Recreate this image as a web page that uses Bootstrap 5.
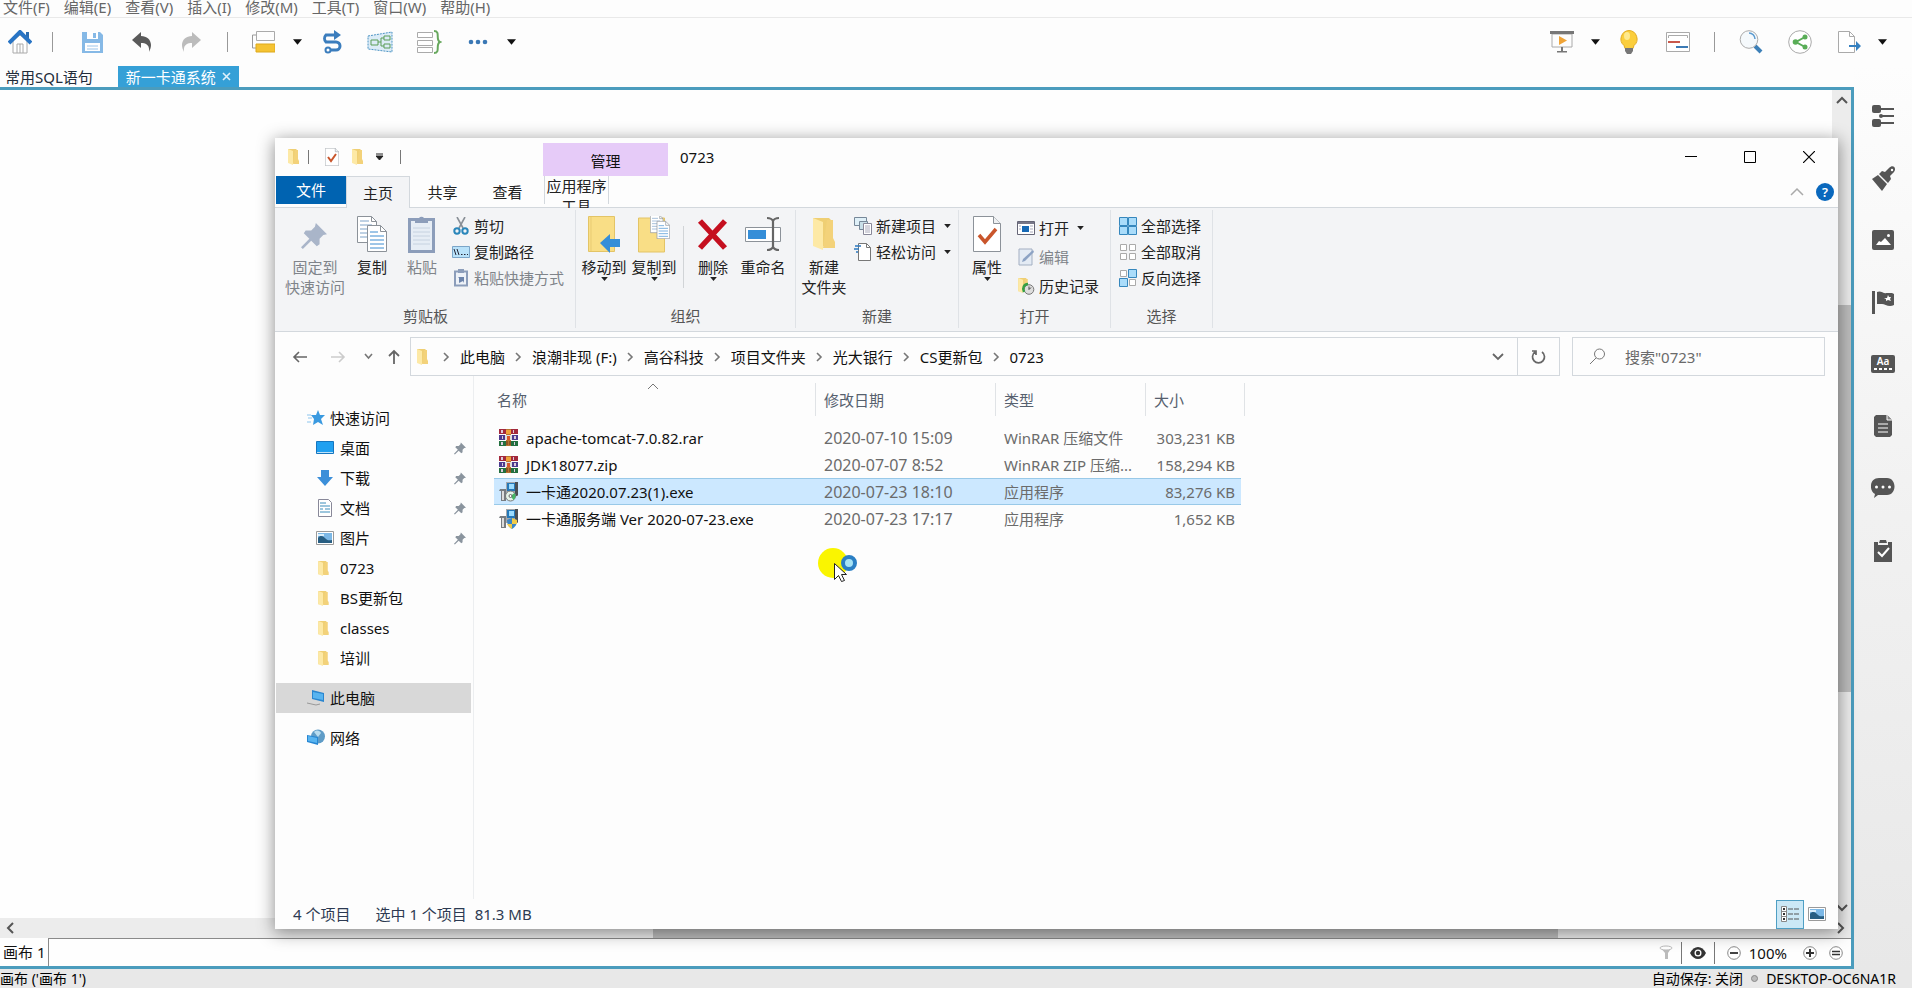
<!DOCTYPE html>
<html lang="zh-CN">
<head>
<meta charset="utf-8">
<meta name="viewport" content="width=device-width, initial-scale=1">
<title>0723</title>
<link href="https://cdn.jsdelivr.net/npm/bootstrap@5.3.0/dist/css/bootstrap.min.css" rel="stylesheet">
<style>
  :root { --frame: #4b9cbd; --line: #d3d8dd; --ribbon: #f3f4f6; }
  body { font-family: "Noto Sans", "Noto Sans CJK SC", sans-serif; font-size: 15px; line-height: 20px; color: #111; background: #fdfdfd; }
  button { border: 0; background: transparent; padding: 0; color: inherit; font: inherit; }
  a { color: inherit; text-decoration: none; }
  svg { flex: none; display: block; }

  /* host application */
  .app-menu { height: 18px; gap: 14px; padding-left: 3px; color: #666; border-bottom: 1px solid #e9e9e9; }
  .app-tools { height: 48px; padding-right: 21px; }
  .tool { width: 49px; display: flex; justify-content: center; }
  .tool-home { width: 40px; }
  .tool-drop { width: 18px; display: flex; justify-content: center; }
  .tool-sep { width: 24px; display: flex; justify-content: center; }
  .tool-sep::before { content: ""; width: 1px; height: 20px; background: #999; }
  .doc-tabs { height: 21px; }
  .doc-tab { padding: 0 5px; color: #222c3a; }
  .doc-tab-on { background: #35a0d7; color: #fff; padding: 0 8px; margin-left: 20px; gap: 6px; }
  .doc-frame { border: 3px solid var(--frame); border-left: 0; background: #fefefe; }
  .vscroll { width: 19px; background: #ececec; }
  .hscroll { height: 20px; background: #ececec; }
  .sb-end { flex: 0 0 20px; display: flex; align-items: center; justify-content: center; }
  .sb-thumb { background: #bdbdbd; }
  .sheet-bar { height: 28px; background: #fefefe; }
  .sheet-tab { width: 49px; padding-left: 3px; border-right: 1px solid #8a8a8a; }
  .sheet-rest { border-top: 1px solid #8a8a8a; padding-right: 8px; }
  .vr-dark { width: 1px; height: 22px; background: #777; }
  .side { width: 58px; padding: 19px 0 0; background: linear-gradient(#fdfdfd, #f1f1f1 50%, #e8e8e8); color: #555; }
  .side button { height: 62px; display: flex; align-items: center; justify-content: center; }
  .app-status { height: 19px; background: #e8e8e8; color: #000; padding-right: 16px; font-size: 14px; }

  /* explorer window lying over the application */
  .explorer { position: absolute; top: 138px; left: 275px; right: 74px; bottom: 59px; background: #fdfdfd; box-shadow: 0 3px 16px 1px rgba(0,0,0,.42); z-index: 5; }
  .titlebar { height: 38px; }
  .qat { width: 268px; padding-left: 12px; }
  .qat-sep { width: 1px; height: 14px; background: #777; }
  .ctx-head { width: 125px; background: #e6cbf8; margin-top: 5px; padding-top: 2px; }
  .ctx-tab { width: 125px; border: solid var(--line); border-width: 0 1px; margin-bottom: 3px; }
  .winbtn { width: 59px; display: flex; align-items: center; justify-content: center; }
  .rtabs { height: 32px; border-bottom: 1px solid var(--line); padding-left: 1px; }
  .rtab { width: 65px; color: #222; }
  .rtab-file { width: 70px; background: #0063b1; color: #fff; margin-bottom: 3px; }
  .rtab-on { width: 64px; background: var(--ribbon); border: 1px solid var(--line); border-bottom: 0; margin-bottom: -1px; }
  .ribbon { height: 124px; background: var(--ribbon); border-bottom: 1px solid var(--line); padding-left: 1px; color: #222; }
  .rgroup { border-right: 1px solid #dfe2e6; margin: 2px 0 3px; display: flex; flex-direction: column; }
  .rgroup-name { text-align: center; color: #555; line-height: 24px; }
  .big { width: 50px; display: flex; flex-direction: column; align-items: center; white-space: nowrap; padding-top: 6px; }
  .big svg.pic { margin-bottom: 3px; }
  .big-56 { width: 56px; }
  .big-70 { width: 70px; }
  .rsmall { display: flex; flex-direction: column; padding: 3px 2px; }
  .rsmall button { display: flex; align-items: center; gap: 4px; height: 26px; white-space: nowrap; }
  .rsmall-wide button { height: 29px; }
  .off { color: #80848a; }
  .addr-row { padding: 5px 13px 0 6px; height: 44px; color: #111; }
  .nav-btn { width: 38px; display: flex; align-items: center; justify-content: center; }
  .addr { border: 1px solid var(--line); margin-left: 1px; height: 39px; }
  .crumb { display: flex; align-items: center; white-space: nowrap; }
  .crumb svg { width: 27px; }
  .refresh { width: 42px; border-left: 1px solid var(--line); display: flex; align-items: center; justify-content: center; }
  .search { width: 253px; height: 39px; border: 1px solid var(--line); margin-left: 12px; padding-left: 16px; gap: 17px; }
  .search input { border: 0; background: transparent; outline: 0; min-width: 0; }
  .search input::placeholder { color: #6a6a6a; opacity: 1; }
  .tree { width: 199px; padding: 27px 2px 0 1px; border-right: 1px solid #eceef0; }
  .tree a { height: 30px; display: flex; align-items: center; padding: 0 5px 0 31px; gap: 5px; }
  .tree .sub a { padding-left: 40px; gap: 6px; }
  .tree .on { background: #d8d8d8; }
  .tree svg.ic { width: 18px; }
  .files { table-layout: fixed; width: 751px; margin: 7px 0 0 20px; border-collapse: separate; border-spacing: 0; color: #6b6b6b; }
  .files th { height: 33px; font-weight: 400; color: #56606e; padding: 0 8px; border-right: 1px solid #e0e3e6; }
  .files th:first-child { padding-left: 3px; }
  .files th:nth-child(4) { border-right: 0; }
  .files th:last-child { padding: 0; }
  .files tbody::before { content: ""; display: block; height: 8px; }
  .files td { height: 27px; padding: 0 7px 0 8px; white-space: nowrap; overflow: hidden; text-overflow: ellipsis; }
  .files td:first-child { padding-left: 5px; color: #111; }
  .files .num { text-align: right; padding-left: 0; padding-right: 6px; }
  .files .sel td:not(:last-child) { background: #cce8ff; border: solid #99c9e8; border-width: 1px 0; }
  .files td:last-child { padding: 0; }
  .files .wide { font-size: 16px; }
  .sort { position: absolute; left: 153px; top: -1px; }
  .pointer { position: absolute; left: 542px; top: 409px; }
  .exp-status { height: 30px; padding-left: 18px; gap: 25px; color: #2c3a52; font-size: 15px; }
  .view-on { width: 28px; height: 29px; background: #cbe8f6; border: 1px solid #4f9fc4; }
  .view-off { width: 34px; }
</style>
</head>
<body>
<svg width="0" height="0" class="position-absolute" aria-hidden="true">
  <defs>
    <symbol id="folder" viewBox="0 0 13 18"><path d="M1 1h8l1 1v13H1z" fill="#efcf74"/><path d="M8 2h3v9l1 2v3H6z" fill="#f3d27a"/><path d="M1 1l5 2v14l-5-2z" fill="#fde9a6"/></symbol>
    <symbol id="caret" viewBox="0 0 10 6"><path d="M0 0h10L5 6z" fill="currentColor"/></symbol>
    <symbol id="chev" viewBox="0 0 27 12"><path d="M11 2l4 4-4 4" fill="none" stroke="#777" stroke-width="1.6"/></symbol>
    <symbol id="up" viewBox="0 0 12 8"><path d="M1 7l5-5 5 5" fill="none" stroke="currentColor" stroke-width="2"/></symbol>
    <symbol id="pin" viewBox="0 0 14 14"><path d="M8 0l6 6-2 .5-2 2 0 3-1.500 1L5.500 9.500 1 14 0 13l4.500-4.500L1.500 5.500l1-1.500h3l2-2z" fill="currentColor"/></symbol>
    <symbol id="rar" viewBox="0 0 19 19"><path d="M0 1h19v5H0z" fill="#a3293c"/><path d="M0 7h19v5H0z" fill="#4c3b8f"/><path d="M0 13h19v5H0z" fill="#23703f"/><path d="M2 2h2v3H2zM14 2h1v3h-1zM3 8h1v3H3zM15 8h2v3h-2zM2 14h2v3H2zM15 14h1v3h-1z" fill="#dcd"/><path d="M7 1h5v17H7z" fill="#b97431"/><path d="M7 2h5v4H7z" fill="#f0a33a"/><path d="M6 7h7v5H6z" fill="#ddd"/><path d="M8 8h3v4H8z" fill="#d8572e"/><path d="M8 13v4M11 13v4" stroke="#653616"/></symbol>
    <symbol id="exe" viewBox="0 0 19 20"><path d="M7 0h10l2 2v12H7z" fill="#a3a8ad"/><path d="M16 0h3v13l-3 2z" fill="#4a4f54"/><path d="M8 1h8v8H8z" fill="#2578b8"/><path d="M10 2h5v5h-5z" fill="#9bdcff"/><path d="M1 7h6v12H2V9H0z" fill="#777c80"/><path d="M3 9h2v9H3z" fill="#ddd"/><circle cx="11.500" cy="14" r="5" fill="#e5f3e8" stroke="#777"/><path d="M11.500 14l4-3a5 5 0 0 1-1 7z" fill="#45b865"/><circle cx="11.500" cy="14" r="1.500" fill="#fff" stroke="#666"/></symbol>
    <symbol id="exe2" viewBox="0 0 19 20"><path d="M7 0h10l2 2v12H7z" fill="#a3a8ad"/><path d="M16 0h3v13l-3 2z" fill="#4a4f54"/><path d="M8 1h8v8H8z" fill="#2578b8"/><path d="M10 2h5v5h-5z" fill="#9bdcff"/><path d="M1 7h6v12H2V9H0z" fill="#777c80"/><path d="M3 9h2v9H3z" fill="#ddd"/><path d="M13 9l5 2c0 5-2 7-5 9-3-2-5-4-5-9z" fill="#3b86c6"/><path d="M13 9l5 2v4h-5zM13 15v5c-2-1-4-3-5-5z" fill="#f2cc48"/></symbol>
    <symbol id="page" viewBox="0 0 28 36"><path d="M.5.5h20l7 7v28H.5z" fill="#fff" stroke="#8c9299"/><path d="M20.500.5v7h7" fill="#eef0f2" stroke="#8c9299"/></symbol>
    <symbol id="photo" viewBox="0 0 18 14"><path d="M.5.5h17v13H.5z" fill="#fff" stroke="#9a9a9a"/><path d="M2 2h14v10H2z" fill="#7cb8e6"/><path d="M2 7c3-4 6-1 8 1s4 1 6 1v3H2z" fill="#285e82"/><path d="M2 3h6v2H2z" fill="#d9eefb"/></symbol>
    <symbol id="copies" viewBox="0 0 30 36"><path d="M.5.500h14l5 5v21H.5z" fill="#fff" stroke="#8c9299"/><path d="M14.500.5v5h5" fill="none" stroke="#8c9299"/><path d="M3 5h9M3 9h12M3 13h12M3 17h12M3 21h12" stroke="#7ea3c8"/><path d="M10.500 9.500h13l6 6v20h-19z" fill="#fff" stroke="#8c9299"/><path d="M23.500 9.500v6h6" fill="none" stroke="#8c9299"/><path d="M13 16h8M13 20h14M13 24h14M13 28h14M13 32h14" stroke="#3c8cd0"/></symbol>
  </defs>
</svg>

<div class="vh-100 d-flex flex-column overflow-hidden position-relative">
  <nav class="app-menu d-flex align-items-end flex-shrink-0" aria-label="菜单">
    <a href="#">文件(F)</a><a href="#">编辑(E)</a><a href="#">查看(V)</a><a href="#">插入(I)</a><a href="#">修改(M)</a><a href="#">工具(T)</a><a href="#">窗口(W)</a><a href="#">帮助(H)</a>
  </nav>

  <div class="app-tools d-flex align-items-center flex-shrink-0" role="toolbar">
    <button class="tool tool-home" aria-label="主页"><svg width="24" height="24"><path d="M5 11v12h14V11l-7-6z" fill="#fff" stroke="#aaa"/><path d="M9 23v-9h6v9M12 14v9" fill="none" stroke="#aaa"/><path d="M18 2h3v7l-3-3z" fill="#2b6cb0"/><path d="M1 13L12 2l11 11" fill="none" stroke="#2874c5" stroke-width="4"/></svg></button>
    <span class="tool-sep me-1"></span>
    <button class="tool" aria-label="保存"><svg width="21" height="21"><path d="M0 0h18l3 3v18H0z" fill="#86b9e6"/><path d="M5 0h11v7H5z" fill="#fff"/><path d="M11 1h3v5h-3z" fill="#86b9e6"/><path d="M3 11h15v8H3z" fill="#fff"/><path d="M5 14h11M5 17h11" stroke="#9cc5ea"/></svg></button>
    <button class="tool" aria-label="撤销"><svg width="20" height="20"><path d="M0 8L9 0v4c8 0 13 7 8 16 1-7-3-9-8-9v5z" fill="#5a5a5a"/></svg></button>
    <button class="tool" aria-label="重做"><svg width="20" height="20"><path d="M20 8l-9-8v4C3 4-2 11 3 20c-1-7 3-9 8-9v5z" fill="#bcbcbc"/></svg></button>
    <span class="tool-sep"></span>
    <button class="tool" aria-label="主题"><svg width="23" height="22"><path d="M4 4H.5v13H4" fill="none" stroke="#999"/><path d="M4.500.5h18v9h-18z" fill="#fdfdfd" stroke="#aaa"/><path d="M4 13h19v8H4z" fill="#f5c332" stroke="#dda91c"/></svg></button>
    <button class="tool-drop" aria-label="更多主题"><svg width="9" height="6"><use href="#caret"/></svg></button>
    <button class="tool" aria-label="联系"><svg width="24" height="24"><path d="M17 5H7a5 5 0 0 0 0 7h10a4 4 0 0 1 0 8h-6" fill="none" stroke="#3b7dbd" stroke-width="3"/><path d="M15 0l7 5-7 5z" fill="#3b7dbd"/><circle cx="9" cy="20" r="2.500" fill="#fff" stroke="#3b7dbd" stroke-width="2"/></svg></button>
    <button class="tool" aria-label="边界"><svg width="26" height="22"><path d="M1 5L25 1v20L1 18z" fill="#dcecf7" stroke="#4d94c4" stroke-dasharray="2 1"/><path d="M4 9h7v5H4zM17 5h6v4h-6zM17 13h6v4h-6zM11 11h3M17 7h-3v8h3" fill="none" stroke="#5a9d57"/></svg></button>
    <button class="tool" aria-label="概要"><svg width="26" height="24"><path d="M1.500 2.500h15v5h-15zM1.500 10.500h15v5h-15zM1.500 17.500h15v5h-15z" fill="#fff" stroke="#aaa"/><path d="M18 1c7 0 1 9 6 11-5 2 1 11-6 11" fill="none" stroke="#67a85d" stroke-width="2"/></svg></button>
    <button class="tool" aria-label="更多"><svg width="20" height="6" fill="#3b78b5"><circle cx="3" cy="3" r="2.300"/><circle cx="10" cy="3" r="2.300"/><circle cx="17" cy="3" r="2.300"/></svg></button>
    <button class="tool-drop me-auto" aria-label="更多选项"><svg width="9" height="6"><use href="#caret"/></svg></button>

    <button class="tool" aria-label="演示"><svg width="24" height="24"><path d="M2 4h20v13H2z" fill="#fdfdfd" stroke="#aaa"/><path d="M0 1h24v3H0zM11 17h2v5h-2zM7 21h10v1.500H7z" fill="#777"/><path d="M9 6l8 4.500L9 15z" fill="#f0a437"/></svg></button>
    <button class="tool-drop" aria-label="演示选项"><svg width="9" height="6"><use href="#caret"/></svg></button>
    <button class="tool" aria-label="头脑风暴"><svg width="18" height="24"><path d="M9 .5a8.500 8.500 0 0 1 5 15l-1 3H5l-1-3a8.500 8.500 0 0 1 5-15z" fill="#fbce3c" stroke="#e2ab22"/><path d="M5 18h8v3l-2 3H7l-2-3z" fill="#777"/><ellipse cx="7" cy="6" rx="3" ry="4" fill="#fee98e"/></svg></button>
    <button class="tool" aria-label="甘特图"><svg width="24" height="20"><path d="M.5.5h23v19H.5z" fill="#fff" stroke="#aaa"/><path d="M2.500 6V3.500h19V6" fill="none" stroke="#aaa"/><path d="M2 9h12v2H2z" fill="#c9584b"/><path d="M10 14h12v2H10z" fill="#3c7ab4"/></svg></button>
    <span class="tool-sep"></span>
    <button class="tool" aria-label="查找"><svg width="24" height="24"><path d="M16 16l6 6" stroke="#3d80b8" stroke-width="4"/><circle cx="10" cy="9.500" r="8.800" fill="#f5f9fc" stroke="#aaa"/><path d="M10 3a6 6 0 0 1 6 6" fill="none" stroke="#5b9bd0" stroke-width="1.500"/></svg></button>
    <button class="tool" aria-label="共享"><svg width="24" height="24"><circle cx="12" cy="12" r="11.300" fill="#fff" stroke="#aaa"/><path d="M17 7l-9 5 9 5" fill="none" stroke="#59ad57" stroke-width="2"/><g fill="#59ad57"><circle cx="17" cy="7" r="2.500"/><circle cx="7.500" cy="12" r="2.800"/><circle cx="17" cy="17" r="2.500"/></g></svg></button>
    <button class="tool" aria-label="导出"><svg width="24" height="23"><path d="M1.500.5h11l5 5v16h-16z" fill="#fff" stroke="#aaa"/><path d="M12.500.5v5h5" fill="none" stroke="#aaa"/><path d="M12 14h7v-4l5 5-5 5v-4h-7z" fill="#3580c0"/></svg></button>
    <button class="tool-drop" aria-label="导出选项"><svg width="9" height="6"><use href="#caret"/></svg></button>
  </div>

  <div class="d-flex flex-grow-1" style="min-height:0">
    <div class="d-flex flex-column flex-grow-1">
      <div class="doc-tabs d-flex flex-shrink-0">
        <button class="doc-tab">常用SQL语句</button>
        <button class="doc-tab doc-tab-on d-flex align-items-center">新一卡通系统<svg width="9" height="9"><path d="M1 1l7 7M8 1L1 8" stroke="#dff1fb" stroke-width="1.600"/></svg></button>
      </div>
      <div class="doc-frame d-flex flex-column flex-grow-1">
        <div class="d-flex flex-grow-1">
          <div class="flex-grow-1"></div>
          <div class="vscroll d-flex flex-column">
            <span class="sb-end"><svg width="12" height="8" color="#555"><use href="#up"/></svg></span>
            <span style="flex-grow:197"></span><span class="sb-thumb" style="flex-grow:392"></span><span style="flex-grow:209"></span>
            <span class="sb-end"><svg width="12" height="8"><path d="M1 1l5 5 5-5" fill="none" stroke="#555" stroke-width="2"/></svg></span>
          </div>
        </div>
        <div class="hscroll d-flex">
          <span class="sb-end"><svg width="8" height="12"><path d="M7 1L2 6l5 5" fill="none" stroke="#555" stroke-width="2"/></svg></span>
          <span style="flex-grow:626"></span><span class="sb-thumb" style="flex-grow:895"></span><span style="flex-grow:270"></span>
          <span class="sb-end"><svg width="8" height="12"><path d="M1 1l5 5-5 5" fill="none" stroke="#555" stroke-width="2"/></svg></span>
        </div>
        <div class="sheet-bar d-flex">
          <button class="sheet-tab text-start text-nowrap">画布 1</button>
          <div class="sheet-rest flex-grow-1 d-flex align-items-center justify-content-end">
            <svg width="14" height="15" class="me-2"><path d="M1 2c3 2 9 2 12 0L9 8v6H6V8z" fill="#bbb"/><ellipse cx="7" cy="3" rx="6" ry="2" fill="#fff" stroke="#bbb"/></svg>
            <span class="vr-dark"></span>
            <button class="mx-2" aria-label="显示"><svg width="16" height="12"><path d="M0 6c4-8 12-8 16 0-4 8-12 8-16 0z" fill="#333"/><circle cx="8" cy="6" r="3.500" fill="#fff"/><circle cx="8" cy="6" r="2.200" fill="#333"/></svg></button>
            <span class="vr-dark me-2"></span>
            <button class="ms-1 me-2" aria-label="缩小"><svg width="14" height="14"><circle cx="7" cy="7" r="6.300" fill="#fff" stroke="#888"/><path d="M3 7h8" stroke="#444" stroke-width="2"/></svg></button>
            <span>100%</span>
            <button class="ms-3 me-2" aria-label="放大"><svg width="14" height="14"><circle cx="7" cy="7" r="6.300" fill="#fff" stroke="#888"/><path d="M3 7h8M7 3v8" stroke="#333" stroke-width="2"/></svg></button>
            <button class="ms-1" aria-label="适合"><svg width="14" height="14"><circle cx="7" cy="7" r="6.300" fill="#fff" stroke="#888"/><path d="M3 5.500h8M3 8.500h8" stroke="#333" stroke-width="1.500"/></svg></button>
          </div>
        </div>
      </div>
    </div>
    <aside class="side d-flex flex-column flex-shrink-0">
      <button aria-label="大纲"><svg width="22" height="22" fill="currentColor"><rect width="9" height="8" rx="2"/><rect y="14" width="9" height="8" rx="2"/><circle cx="9" cy="11" r="2"/><path d="M9 3h13v2H9zM10 10h12v2H10zM9 17h13v2H9z"/></svg></button>
      <button aria-label="格式"><svg width="25" height="25" viewBox="0 0 25 25"><path d="M1 13l6-4 9 9-5 7zM8 8l3-3 3 1 4-4c4-4 8 0 5 4l-4 4 1 3-3 4z" fill="currentColor"/><circle cx="21" cy="4" r="1.200" fill="#fff"/></svg></button>
      <button aria-label="图片"><svg width="22" height="20"><rect width="22" height="20" rx="2" fill="currentColor"/><path d="M4 15l3-4 2 1 4-4 6 7z" fill="#fff"/><circle cx="16.500" cy="5.500" r="1.500" fill="#fff"/></svg></button>
      <button aria-label="标记"><svg width="22" height="23"><path d="M0 0h3v23H0zM5 1c4-2 6 2 10 1h5l2 1v11c-5 3-9-1-12-1H5z" fill="currentColor"/><path d="M16 4l1 2h2l-1 2 1 2-3-1-2 1V8l-2-1h3z" fill="#fff"/></svg></button>
      <button aria-label="标签"><svg width="24" height="18"><rect width="24" height="18" rx="2" fill="currentColor"/><path d="M3 14h18" stroke="#fff" stroke-width="2" stroke-dasharray="3 2"/><text x="12" y="10" text-anchor="middle" font-size="10" font-weight="600" fill="#fff">Aa</text></svg></button>
      <button aria-label="备注"><svg width="18" height="22"><path d="M2 0h11l5 5v15l-2 2H2l-2-2V2z" fill="currentColor"/><path d="M13 0v5h5" fill="#888" stroke="#fff"/><path d="M4 9h10M4 13h10M4 17h10" stroke="#fff"/></svg></button>
      <button aria-label="批注"><svg width="24" height="20"><path d="M8 0h8c10 0 10 17 0 17H7l-4 3 1-4C-2 13-2 0 8 0z" fill="currentColor"/><g fill="#fff"><circle cx="5.500" cy="9" r="1.500"/><circle cx="12" cy="9" r="1.500"/><circle cx="18.500" cy="9" r="1.500"/></g></svg></button>
      <button aria-label="任务"><svg width="18" height="23"><path d="M0 3h4v3h10V3h4v20H0zM6 1h6l1 3H5z" fill="currentColor"/><path d="M4 13l4 4 7-8" fill="none" stroke="#fff" stroke-width="2"/></svg></button>
    </aside>
  </div>

  <footer class="app-status d-flex align-items-center flex-shrink-0">
    <span class="me-auto">画布 ('画布 1')</span>
    <span>自动保存: 关闭</span>
    <svg class="mx-2" width="7" height="7"><circle cx="3.500" cy="3.500" r="3" fill="#bbb" stroke="#888"/></svg>
    <span>DESKTOP-OC6NA1R</span>
  </footer>

  <section class="explorer d-flex flex-column" aria-label="0723">
    <div class="titlebar d-flex">
      <div class="qat d-flex align-items-center">
        <svg width="13" height="18"><use href="#folder"/></svg>
        <span class="qat-sep ms-2"></span>
        <button class="ms-3" aria-label="属性"><svg width="14" height="18"><use href="#page" width="14" height="18"/><path d="M3 9l3 4 5-7" fill="none" stroke="#c9552b" stroke-width="2"/></svg></button>
        <button class="ms-2 ps-1" aria-label="新建文件夹"><svg width="13" height="18"><use href="#folder"/></svg></button>
        <button class="ms-2 ps-1" aria-label="自定义"><svg width="8" height="8"><path d="M0 1h7M0 3h7L3.500 7z" fill="#222" stroke="#222"/></svg></button>
        <span class="qat-sep ms-3"></span>
      </div>
      <div class="ctx-head d-flex align-items-center justify-content-center">管理</div>
      <div class="d-flex align-items-center ps-2 ms-1">0723</div>
      <div class="ms-auto d-flex">
        <button class="winbtn" aria-label="最小化"><svg width="12" height="12"><path d="M0 5.500h12" stroke="#000"/></svg></button>
        <button class="winbtn" aria-label="最大化"><svg width="12" height="12"><path d="M.5.5h11v11H.5z" fill="none" stroke="#000"/></svg></button>
        <button class="winbtn" aria-label="关闭"><svg width="12" height="12"><path d="M0 0l12 12M12 0L0 12" stroke="#000" stroke-width="1.200"/></svg></button>
      </div>
    </div>
    <div class="rtabs d-flex">
      <button class="rtab rtab-file">文件</button>
      <button class="rtab rtab-on">主页</button>
      <button class="rtab">共享</button>
      <button class="rtab">查看</button>
      <button class="rtab ctx-tab ms-1">应用程序工具</button>
      <button class="ms-auto me-2 text-secondary" aria-label="折叠功能区"><svg width="14" height="9"><path d="M1 8l6-6 6 6" fill="none" stroke="#aaa" stroke-width="1.500"/></svg></button>
      <button class="me-1 ms-1" aria-label="帮助"><svg width="18" height="18"><circle cx="9" cy="9" r="9" fill="#0a68bd"/><text x="9" y="14" text-anchor="middle" font-size="13" font-weight="600" fill="#fff">?</text></svg></button>
    </div>

    <div class="ribbon d-flex">
      <div class="rgroup" style="width:300px">
        <div class="d-flex flex-grow-1 ps-1">
          <button class="big big-70 off"><svg class="pic" width="36" height="38" color="#a9b5c9"><use href="#pin" x="4" y="7" width="26" height="26"/></svg><span>固定到</span><span>快速访问</span></button>
          <button class="big" style="width:44px"><svg class="pic" width="30" height="38"><use href="#copies" width="30" height="36"/></svg><span>复制</span></button>
          <button class="big big-56 off"><svg class="pic" width="28" height="38"><rect x="1.500" y="3.500" width="24" height="32" fill="#e6edf5" stroke="#8c9dba" stroke-width="3"/><path d="M7 2h4a3 3 0 0 1 5 0h4v5H7z" fill="#8c9dba"/><path d="M5 12h17M5 16h17M5 20h17M5 24h17M5 28h17" stroke="#c6d2e0"/></svg><span>粘贴</span></button>
          <div class="rsmall">
            <button><svg width="18" height="18"><path d="M5 0l6 11M13 0L7 11" stroke="#8a9097" stroke-width="1.600"/><circle cx="5" cy="14" r="2.700" fill="none" stroke="#2a86ba" stroke-width="2"/><circle cx="13" cy="14" r="2.700" fill="none" stroke="#2a86ba" stroke-width="2"/></svg>剪切</button>
            <button><svg width="18" height="12"><path d="M.5.500h17v11H.5z" fill="#b9e2fa" stroke="#7ba5c8"/><path d="M2 3l2 6M5 3l2 6M9 8.500h1.500M12 8.500h1.500M15 8.500h1" stroke="#223"/></svg>复制路径</button>
            <button class="off"><svg width="18" height="18"><path d="M3 2.500h12v14H3z" fill="#eef2f8" stroke="#8c9dba" stroke-width="2"/><path d="M6 0h6v4H6z" fill="#8c9dba"/><path d="M7 14V9l-1-1h6v6l-1-2z" fill="#6d84ab"/></svg>粘贴快捷方式</button>
          </div>
        </div>
        <div class="rgroup-name">剪贴板</div>
      </div>
      <div class="rgroup" style="width:220px">
        <div class="d-flex flex-grow-1" style="padding-left:3px">
          <button class="big"><svg class="pic" width="34" height="38"><path d="M1.500.5h26v35h-26z" fill="#f9de86" stroke="#e3c466"/><path d="M4 1v34" stroke="#e9cb72"/><path d="M13 27l10-9v5h10v8H23v6z" fill="#358ed8"/></svg><span>移动到</span><svg width="7" height="4"><use href="#caret"/></svg></button>
          <button class="big"><svg class="pic" width="34" height="38"><path d="M1.500 2h26v34h-26z" fill="#f9de86" stroke="#e3c466"/><use href="#copies" x="13" y="-1" width="20" height="24"/></svg><span>复制到</span><svg width="7" height="4"><use href="#caret"/></svg></button>
          <span style="width:1px" class="my-3 ms-1 me-1 bg-secondary bg-opacity-25"></span>
          <button class="big"><svg class="pic" width="32" height="38"><path d="M3 5l25 27M28 5L3 32" stroke="#c50f1f" stroke-width="5.500"/></svg><span>删除</span><svg width="7" height="4"><use href="#caret"/></svg></button>
          <button class="big"><svg class="pic" width="36" height="38"><path d="M.5 11.500h35v14H.5z" fill="#fff" stroke="#8c9299"/><path d="M3 14h18v9H3z" fill="#358ed8"/><path d="M22 2c4 0 5 1 6 3 1-2 2-3 6-3M22 34c4 0 5-1 6-3 1 2 2 3 6 3M28 4v28" fill="none" stroke="#666" stroke-width="2.200"/></svg><span>重命名</span></button>
        </div>
        <div class="rgroup-name">组织</div>
      </div>
      <div class="rgroup" style="width:163px">
        <div class="d-flex flex-grow-1">
          <button class="big big-56"><svg class="pic" width="26" height="38"><use href="#folder" width="26" height="36"/></svg><span>新建</span><span>文件夹</span></button>
          <div class="rsmall">
            <button><svg width="18" height="18"><path d="M.5.5h12v8H.5z" fill="#dff0f8" stroke="#789"/><path d="M5.500 4.500h8v8h-8z" fill="#c8dfe8" stroke="#789"/><path d="M9.500 6.500h8v11h-8z" fill="#fff" stroke="#889"/><path d="M11 9h5M11 11h5M11 13h5M11 15h5" stroke="#aab"/></svg>新建项目<svg class="ms-1" width="7" height="4"><use href="#caret"/></svg></button>
            <button><svg width="18" height="18"><path d="M4.500.5h8l4 4v13h-12z" fill="#fff" stroke="#777"/><path d="M12.500.5v4h4" fill="none" stroke="#777"/><path d="M1 3h6M0 6h5M2 9h2" stroke="#2d78c0" stroke-width="1.500"/></svg>轻松访问<svg class="ms-1" width="7" height="4"><use href="#caret"/></svg></button>
          </div>
        </div>
        <div class="rgroup-name">新建</div>
      </div>
      <div class="rgroup" style="width:152px">
        <div class="d-flex flex-grow-1">
          <button class="big big-56"><svg class="pic" width="28" height="38"><use href="#page" width="28" height="36"/><path d="M6 19l6 7 11-13" fill="none" stroke="#c9552b" stroke-width="3.500"/></svg><span>属性</span><svg width="7" height="4"><use href="#caret"/></svg></button>
          <div class="rsmall rsmall-wide">
            <button><svg width="18" height="14"><path d="M.5.5h17v13H.5z" fill="#fff" stroke="#667"/><path d="M1 1h16v2H1z" fill="#778"/><path d="M5 5h7v6H5z" fill="#1769b5"/><path d="M2 5h2M2 8h2M13 5h3M13 8h3M13 11h3" stroke="#aab"/></svg>打开<svg class="ms-1" width="7" height="4"><use href="#caret"/></svg></button>
            <button class="off"><svg width="18" height="18"><path d="M2 1h13v16H2z" fill="#e4ebf4" stroke="#a3afc2"/><path d="M5 14l1-3 10-9 1 2-9 9z" fill="#8da3c4"/></svg>编辑</button>
            <button><svg width="18" height="18"><use href="#folder" width="13" height="17"/><circle cx="12" cy="12.500" r="4.800" fill="#ddd" stroke="#777"/><path d="M12 9.500v3l2-2" fill="none" stroke="#444"/><path d="M11 7c-4 0-6 4-4 8" fill="none" stroke="#35a044" stroke-width="2.500"/></svg>历史记录</button>
          </div>
        </div>
        <div class="rgroup-name">打开</div>
      </div>
      <div class="rgroup" style="width:102px">
        <div class="d-flex flex-grow-1" style="padding-left:6px">
          <div class="rsmall">
            <button><svg width="18" height="18" fill="#aadcfa" stroke="#3687bd"><path d="M.5.5h8v8h-8zM9.500.5h8v8h-8zM.5 9.500h8v8h-8zM9.500 9.500h8v8h-8z"/></svg>全部选择</button>
            <button><svg width="18" height="18" fill="#fff" stroke="#aaa"><path d="M1.500 1.500h6v6h-6zM10.500 1.500h6v6h-6zM1.500 10.500h6v6h-6zM10.500 10.500h6v6h-6z"/></svg>全部取消</button>
            <button><svg width="18" height="18"><path d="M1.500 1.500h6v6h-6zM10.500 10.500h6v6h-6z" fill="#fff" stroke="#aaa"/><path d="M9.500.5h8v8h-8zM.5 9.500h8v8h-8z" fill="#aadcfa" stroke="#3687bd"/></svg>反向选择</button>
          </div>
        </div>
        <div class="rgroup-name">选择</div>
      </div>
    </div>

    <div class="addr-row d-flex">
      <button class="nav-btn" aria-label="后退"><svg width="16" height="12"><path d="M15 6H2M7 1L2 6l5 5" fill="none" stroke="#666" stroke-width="1.600"/></svg></button>
      <button class="nav-btn" aria-label="前进"><svg width="16" height="12"><path d="M1 6h13M9 1l5 5-5 5" fill="none" stroke="#ccc" stroke-width="1.600"/></svg></button>
      <button class="nav-btn" style="width:22px" aria-label="最近位置"><svg width="9" height="7"><path d="M1 1l3.500 4L8 1" fill="none" stroke="#777" stroke-width="1.600"/></svg></button>
      <button class="nav-btn" style="width:30px" aria-label="上移"><svg width="12" height="16"><path d="M6 15V2M1 7l5-5 5 5" fill="none" stroke="#666" stroke-width="1.800"/></svg></button>
      <nav class="addr d-flex flex-grow-1" aria-label="地址">
        <div class="d-flex align-items-center" style="padding-left:5px"><svg width="13" height="18"><use href="#folder"/></svg></div>
        <span class="crumb ps-1"><svg width="27" height="12"><use href="#chev"/></svg><a href="#">此电脑</a></span>
        <span class="crumb"><svg width="27" height="12"><use href="#chev"/></svg><a href="#">浪潮非现 (F:)</a></span>
        <span class="crumb"><svg width="27" height="12"><use href="#chev"/></svg><a href="#">高谷科技</a></span>
        <span class="crumb"><svg width="27" height="12"><use href="#chev"/></svg><a href="#">项目文件夹</a></span>
        <span class="crumb"><svg width="27" height="12"><use href="#chev"/></svg><a href="#">光大银行</a></span>
        <span class="crumb"><svg width="27" height="12"><use href="#chev"/></svg><a href="#">CS更新包</a></span>
        <span class="crumb"><svg width="27" height="12"><use href="#chev"/></svg><a href="#">0723</a></span>
        <button class="nav-btn ms-auto" aria-label="展开"><svg width="12" height="8"><path d="M1 1l5 5 5-5" fill="none" stroke="#666" stroke-width="1.800"/></svg></button>
        <button class="refresh" aria-label="刷新"><svg width="15" height="15"><path d="M4 3a6 6 0 1 0 7 0M1 2h4v4" fill="none" stroke="#666" stroke-width="1.700"/></svg></button>
      </nav>
      <label class="search d-flex align-items-center"><svg width="17" height="17"><circle cx="10.500" cy="6" r="5" fill="none" stroke="#777"/><path d="M7 10l-6 6" stroke="#777"/></svg><input type="search" placeholder='搜索"0723"' aria-label="搜索"></label>
    </div>

    <div class="d-flex flex-grow-1" style="min-height:0">
      <nav class="tree flex-shrink-0" aria-label="导航窗格">
        <a href="#"><svg class="ic" width="18" height="16"><path d="M11 0l2 5h5l-4 4 2 6-5-3-5 3 1-6-3-4h5z" fill="#3a9ae0"/><path d="M0 5h4M1 8h4M0 12h4" stroke="#8cc5ee"/></svg>快速访问</a>
        <div class="sub">
          <a href="#"><svg class="ic" height="14"><path d="M.5.5h17v12H.5z" fill="#20a0f0" stroke="#1676bf"/><path d="M1 11h16v1H1z" fill="#bfe3fa"/></svg>桌面<svg class="ms-auto" width="12" height="13" color="#8a949e"><use href="#pin"/></svg></a>
          <a href="#"><svg class="ic" height="16"><path d="M5 0h8v7h4l-8 9-8-9h4z" fill="#3c8fd9"/></svg>下载<svg class="ms-auto" width="12" height="13" color="#8a949e"><use href="#pin"/></svg></a>
          <a href="#"><svg class="ic" height="18"><path d="M2.500.5h10l3 3v14h-13z" fill="#fff" stroke="#889"/><path d="M4 4h6M4 7h10M4 10h3M9 10h5M4 13h10" stroke="#3b8dbb"/></svg>文档<svg class="ms-auto" width="12" height="13" color="#8a949e"><use href="#pin"/></svg></a>
          <a href="#"><svg class="ic" height="14"><use href="#photo"/></svg>图片<svg class="ms-auto" width="12" height="13" color="#8a949e"><use href="#pin"/></svg></a>
          <a href="#"><svg class="ic" height="17"><use href="#folder" x="1" width="13" height="17"/></svg>0723</a>
          <a href="#"><svg class="ic" height="17"><use href="#folder" x="1" width="13" height="17"/></svg>BS更新包</a>
          <a href="#"><svg class="ic" height="17"><use href="#folder" x="1" width="13" height="17"/></svg>classes</a>
          <a href="#"><svg class="ic" height="17"><use href="#folder" x="1" width="13" height="17"/></svg>培训</a>
        </div>
        <a href="#" class="on" style="margin-top:10px"><svg class="ic" height="18"><path d="M5 1l12 3v9L5 10z" fill="#2b86cf"/><path d="M6 3l10 2v6L6 9z" fill="#58b4f0"/><path d="M0 14l9 2 4-1" fill="none" stroke="#999"/></svg>此电脑</a>
        <a href="#" style="margin-top:10px"><svg class="ic" height="18"><circle cx="11" cy="7.500" r="7" fill="#5f9cc7"/><path d="M7 3c3-3 6-1 7 1l-3 4z" fill="#b8dcef"/><path d="M0 6l11 2v8L0 13z" fill="#2786d2"/><path d="M1 7l9 2v5l-9-2z" fill="#58b4f0"/></svg>网络</a>
      </nav>
      <div class="flex-grow-1">
        <table class="files">
          <colgroup><col style="width:322px"><col style="width:180px"><col style="width:150px"><col style="width:95px"><col style="width:4px"></colgroup>
          <thead><tr><th scope="col" class="position-relative">名称<svg class="sort" width="12" height="8"><path d="M1 7l5-5 5 5" fill="none" stroke="#777"/></svg></th><th scope="col">修改日期</th><th scope="col">类型</th><th scope="col">大小</th><th></th></tr></thead>
          <tbody>
            <tr><td><div class="d-flex align-items-center gap-2"><svg width="19" height="19"><use href="#rar"/></svg>apache-tomcat-7.0.82.rar</div></td><td class="wide">2020-07-10 15:09</td><td>WinRAR 压缩文件</td><td class="num">303,231 KB</td><td></td></tr>
            <tr><td><div class="d-flex align-items-center gap-2"><svg width="19" height="19"><use href="#rar"/></svg>JDK18077.zip</div></td><td class="wide">2020-07-07 8:52</td><td>WinRAR ZIP 压缩...</td><td class="num">158,294 KB</td><td></td></tr>
            <tr class="sel"><td><div class="d-flex align-items-center gap-2"><svg width="19" height="20"><use href="#exe"/></svg>一卡通2020.07.23(1).exe</div></td><td class="wide">2020-07-23 18:10</td><td>应用程序</td><td class="num">83,276 KB</td><td></td></tr>
            <tr><td><div class="d-flex align-items-center gap-2"><svg width="19" height="20"><use href="#exe2"/></svg>一卡通服务端 Ver 2020-07-23.exe</div></td><td class="wide">2020-07-23 17:17</td><td>应用程序</td><td class="num">1,652 KB</td><td></td></tr>
          </tbody>
        </table>
      </div>
    </div>

    <div class="exp-status d-flex align-items-center">
      <span>4 个项目</span><span>选中 1 个项目&nbsp; 81.3 MB</span>
      <div class="ms-auto d-flex align-items-center">
        <button class="view-on d-flex align-items-center justify-content-center" aria-label="详细信息"><svg width="18" height="16"><path d="M.5.500h5v15h-5zM.5 5.500h5M.5 10.500h5" fill="#fff" stroke="#888"/><path d="M2 3h2M2 8h2M2 13h2" stroke="#333" stroke-width="2"/><path d="M7 3h5M13 3h5M7 8h5M13 8h5M7 13h5M13 13h5" stroke="#555"/></svg></button>
        <button class="view-off d-flex justify-content-start ps-1" aria-label="缩略图"><svg width="18" height="14"><use href="#photo"/></svg></button>
      </div>
    </div>

    <svg class="pointer" width="42" height="38" aria-hidden="true"><circle cx="16" cy="16" r="15" fill="#faf500"/><circle cx="32" cy="16" r="6" fill="#a7e3f5" stroke="#2b7fc4" stroke-width="4"/><path d="M17.500 16.500v16l4-4 3 6 3-1-3-6h5z" fill="#fff" stroke="#222"/></svg>
  </section>
</div>
<script src="https://cdn.jsdelivr.net/npm/bootstrap@5.3.0/dist/js/bootstrap.bundle.min.js"></script>
</body>
</html>
